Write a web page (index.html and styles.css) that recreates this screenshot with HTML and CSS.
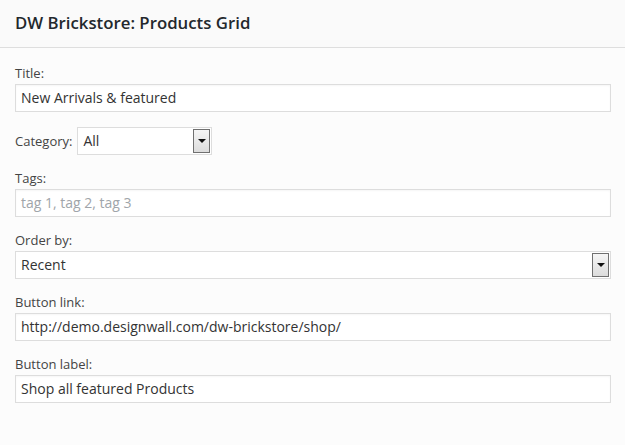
FILE: index.html
```html
<!DOCTYPE html>
<html>
<head>
<meta charset="utf-8">
<link rel="stylesheet" href="styles.css">
</head>
<body>
<div class="widget">
  <div class="widget-head"><h3 class="widget-title">DW Brickstore: Products Grid</h3></div>
  <div class="widget-body">
    <div class="field">
      <label class="lbl">Title:</label>
      <div class="input">New Arrivals &amp; featured</div>
    </div>
    <div class="field inline">
      <label class="lbl">Category:</label>
      <div class="select small"><span class="val">All</span><span class="arrow"></span></div>
    </div>
    <div class="field">
      <label class="lbl">Tags:</label>
      <div class="input placeholder">tag 1, tag 2, tag 3</div>
    </div>
    <div class="field">
      <label class="lbl">Order by:</label>
      <div class="select"><span class="val">Recent</span><span class="arrow"></span></div>
    </div>
    <div class="field">
      <label class="lbl">Button link:</label>
      <div class="input">http://demo.designwall.com/dw-brickstore/shop/</div>
    </div>
    <div class="field">
      <label class="lbl">Button label:</label>
      <div class="input">Shop all featured Products</div>
    </div>
  </div>
</div>
</body>
</html>
```
FILE: styles.css
```css
html, body {
  margin: 0;
  padding: 0;
  background: #fcfcfc;
}
body {
  font-family: "Open Sans", "Noto Sans", sans-serif;
  font-size: 13px;
  color: #444;
  width: 625px;
  height: 445px;
  overflow: hidden;
}
.widget-head {
  background: #fafafa;
  height: 47px;
  border-bottom: 1px solid #dedede;
  display: flex;
  align-items: center;
  padding-left: 15px;
}
.widget-title {
  margin: 0;
  font-size: 16.8px;
  font-weight: 600;
  color: #23282d;
  line-height: 20px;
  position: relative;
  top: -1px;
}
.widget-body {
  padding: 16px 14px 0 15px;
}
.field {
  margin-bottom: 14px;
}
.lbl {
  display: block;
  line-height: 18px;
  margin-bottom: 2px;
  color: #444;
}
.input {
  box-sizing: border-box;
  height: 28px;
  border: 1px solid #dddddd;
  background: #fff;
  padding: 0 5px;
  line-height: 26px;
  font-size: 14px;
  color: #333;
  box-shadow: inset 0 1px 2px rgba(0,0,0,0.04);
  white-space: nowrap;
}
.input.placeholder {
  color: #a0a5aa;
}
.field.inline {
  display: flex;
  align-items: center;
  height: 29px;
}
.field.inline .lbl {
  margin: 0 5px 0 0;
}
.select {
  box-sizing: border-box;
  height: 28px;
  border: 1px solid #dddddd;
  background: #fff;
  display: flex;
  align-items: stretch;
  color: #333;
  font-size: 14px;
  padding: 1px;
}
.select.small {
  width: 135px;
  height: 28px;
}
.select .val {
  flex: 1;
  padding-left: 4px;
  line-height: 24px;
}
.select .arrow {
  width: 17px;
  box-sizing: border-box;
  border: 1px solid #707070;
  background: linear-gradient(#f6f6f6, #dcdcdc);
  display: flex;
  align-items: center;
  justify-content: center;
}
.select .arrow::after {
  content: "";
  width: 0;
  height: 0;
  border-left: 4px solid transparent;
  border-right: 4px solid transparent;
  border-top: 4px solid #111;
}
```
